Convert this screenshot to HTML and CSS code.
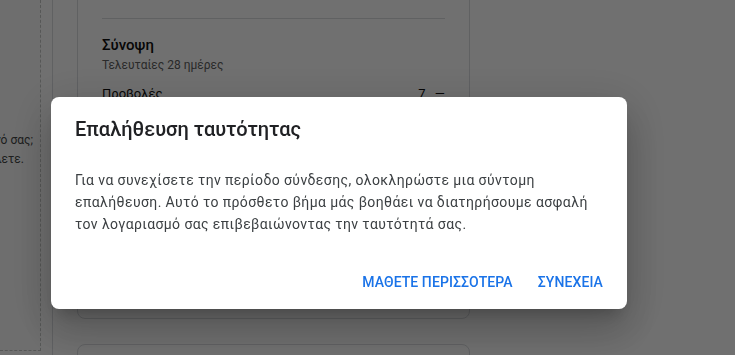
FILE: index.html
```html
<!DOCTYPE html>
<html lang="el">
<head>
  <title>Επαλήθευση ταυτότητας</title>
  <meta charset="UTF-8">
  <meta name="viewport" content="width=device-width, initial-scale=1.0">
  <link rel="stylesheet" href="styles.css">
</head>
<body>
  <div id="page">
    <div id="side">
      <div class="side-text">
        <span class="side-line">Χρειάζεστε βοήθεια με το περιεχόμενό σας;</span>
        <span class="side-line short">Επικοινωνήστε μαζί μας όποτε θέλετε.</span>
      </div>
    </div>

    <div id="main">
      <div class="card card-summary">
        <div class="card-top"></div>
        <div class="summary">
          <h2>Σύνοψη</h2>
          <p class="subtitle">Τελευταίες 28 ημέρες</p>
          <div class="stat-row">
            <span>Προβολές</span>
            <span class="stat-value">7 <span class="trend">—</span></span>
          </div>
          <div class="stat-row">
            <span>Χρόνος παρακολούθησης (ώρες)</span>
            <span class="stat-value">0,1 <span class="trend">—</span></span>
          </div>
          <div class="stat-row">
            <span>Συνδρομητές</span>
            <span class="stat-value">0 <span class="trend">—</span></span>
          </div>
        </div>
      </div>
      <div class="card card-next"></div>
    </div>
  </div>

  <div id="scrim"></div>

  <div id="dialog" role="dialog">
    <h1>Επαλήθευση ταυτότητας</h1>
    <p class="dialog-text">Για να συνεχίσετε την περίοδο σύνδεσης, ολοκληρώστε μια σύντομη επαλήθευση. Αυτό το πρόσθετο βήμα μάς βοηθάει να διατηρήσουμε ασφαλή τον λογαριασμό σας επιβεβαιώνοντας την ταυτότητά σας.</p>
    <div class="dialog-actions">
      <button class="text-button">Μάθετε περισσότερα</button>
      <button class="text-button">Συνέχεια</button>
    </div>
  </div>
</body>
</html>
```

FILE: styles.css
```css
body {
  margin: 0;
  background-color: #fff;
  font-family: Roboto, 'Noto Sans', Arial, sans-serif;
  color: #0d0d0d;
  overflow: hidden;
  height: 100vh;
}

#page {
  display: flex;
  align-items: flex-start;
  height: 100%;
}

#side {
  width: 40px;
  height: 350px;
  flex-shrink: 0;
  border-right: 1px dashed #c4c7c5;
  border-bottom: 1px dashed #c4c7c5;
  background-color: #fbfbfb;
  overflow: hidden;
  display: flex;
  justify-content: flex-end;
}

.side-text {
  padding-top: 131px;
  padding-right: 7px;
  display: flex;
  flex-direction: column;
  align-items: flex-end;
  font-size: 12px;
  line-height: 19px;
  color: #444746;
  white-space: nowrap;
}

.side-line.short {
  padding-right: 9px;
}

#main {
  margin-left: 11px;
  border-left: 1px solid #dadce0;
  padding-left: 24px;
  height: 100%;
  display: flex;
  flex-direction: column;
  gap: 25px;
}

.card {
  width: 391px;
  border: 1px solid #dadce0;
  border-radius: 8px;
  background-color: #fff;
  flex-shrink: 0;
}

.card-summary {
  margin-top: -61px;
  height: 380px;
  padding: 0 24px;
  box-sizing: border-box;
  width: 393px;
}

.card-top {
  height: 79px;
  border-bottom: 1px solid #dadce0;
  box-sizing: border-box;
}

.summary h2 {
  margin: 15px 0 0;
  font-size: 15px;
  font-weight: 500;
  line-height: 22px;
  color: #0f0f0f;
}

.subtitle {
  margin: 0;
  font-size: 12px;
  line-height: 18px;
  color: #606060;
}

.stat-row {
  display: flex;
  justify-content: space-between;
  font-size: 13px;
  line-height: 20px;
  margin-top: 10px;
}

.stat-value .trend {
  margin-left: 6px;
}

.card-next {
  height: 120px;
  width: 391px;
}

#scrim {
  position: fixed;
  inset: 0;
  background-color: rgba(0, 0, 0, 0.56);
}

#dialog {
  position: fixed;
  left: 51px;
  top: 97px;
  width: 576px;
  box-sizing: border-box;
  padding: 16px 24px 9px;
  background-color: #fff;
  border-radius: 8px;
  box-shadow: 0 11px 15px -7px rgba(0, 0, 0, 0.2),
    0 24px 38px 3px rgba(0, 0, 0, 0.14),
    0 9px 46px 8px rgba(0, 0, 0, 0.12);
}

#dialog h1 {
  margin: 0;
  font-size: 20px;
  font-weight: 500;
  line-height: 32px;
  color: #202124;
}

.dialog-text {
  margin: 24px 0 0;
  font-size: 14px;
  line-height: 22px;
  letter-spacing: 0.4px;
  color: #3c4043;
}

.dialog-actions {
  display: flex;
  justify-content: flex-end;
  gap: 9px;
  margin-top: 29px;
  margin-right: -8px;
}

.text-button {
  background: none;
  border: none;
  padding: 8px;
  font-family: inherit;
  font-size: 14px;
  font-weight: 500;
  line-height: 20px;
  letter-spacing: 0.1px;
  text-transform: uppercase;
  color: #1a73e8;
  cursor: pointer;
  border-radius: 4px;
}
```
